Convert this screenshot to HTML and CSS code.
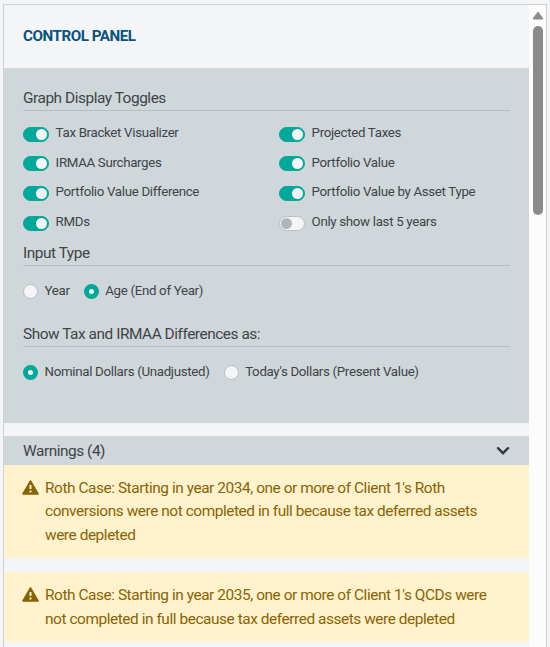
FILE: index.html
```html
<!DOCTYPE html>
<html lang="en">
<head>
    <meta charset="UTF-8">
    <meta name="viewport" content="width=device-width, initial-scale=1.0">
    <title>Control Panel</title>
    <link rel="stylesheet" href="styles.css">
</head>
<body>
    <div class="control-panel">
        <div class="panel-content">
            <h2 class="panel-title">Control Panel</h2>

            <div class="settings">
                <h3 class="section-title">Graph Display Toggles</h3>
                <div class="toggle-grid">
                    <label class="toggle"><input type="checkbox" checked><span>Tax Bracket Visualizer</span></label>
                    <label class="toggle"><input type="checkbox" checked><span>Projected Taxes</span></label>
                    <label class="toggle"><input type="checkbox" checked><span>IRMAA Surcharges</span></label>
                    <label class="toggle"><input type="checkbox" checked><span>Portfolio Value</span></label>
                    <label class="toggle"><input type="checkbox" checked><span>Portfolio Value Difference</span></label>
                    <label class="toggle"><input type="checkbox" checked><span>Portfolio Value by Asset Type</span></label>
                    <label class="toggle"><input type="checkbox" checked><span>RMDs</span></label>
                    <label class="toggle"><input type="checkbox"><span>Only show last 5 years</span></label>
                </div>

                <h3 class="section-title">Input Type</h3>
                <div class="radio-row">
                    <label class="radio"><input type="radio" name="inputType"><span>Year</span></label>
                    <label class="radio"><input type="radio" name="inputType" checked><span>Age (End of Year)</span></label>
                </div>

                <h3 class="section-title">Show Tax and IRMAA Differences as:</h3>
                <div class="radio-row">
                    <label class="radio"><input type="radio" name="dollars" checked><span>Nominal Dollars (Unadjusted)</span></label>
                    <label class="radio"><input type="radio" name="dollars"><span>Today's Dollars (Present Value)</span></label>
                </div>
            </div>

            <div class="warnings-header">
                <span>Warnings (4)</span>
                <svg class="chevron" viewBox="0 0 14 10"><path d="M2 2.2 L7 7.2 L12 2.2"/></svg>
            </div>
            <div class="alert">
                <svg class="alert-icon" viewBox="0 0 17 15"><path class="triangle" d="M8.5 1 L16 14 H1 Z"/><path class="mark" d="M8.5 5 V9 M8.5 10.5 V12.5"/></svg>
                <p>Roth Case: Starting in year 2034, one or more of Client 1's Roth conversions were not completed in full because tax deferred assets were depleted</p>
            </div>
            <div class="alert">
                <svg class="alert-icon" viewBox="0 0 17 15"><path class="triangle" d="M8.5 1 L16 14 H1 Z"/><path class="mark" d="M8.5 5 V9 M8.5 10.5 V12.5"/></svg>
                <p>Roth Case: Starting in year 2035, one or more of Client 1's QCDs were not completed in full because tax deferred assets were depleted</p>
            </div>
        </div>
        <div class="scrollbar">
            <svg class="scroll-arrow" viewBox="0 0 12 9"><path d="M6 1 L11 8 H1 Z"/></svg>
            <div class="scroll-thumb"></div>
        </div>
    </div>
</body>
</html>
```
FILE: styles.css
```css
* {
    box-sizing: border-box;
}
body {
    font-family: Roboto, sans-serif;
    margin: 0;
    padding: 4px 3px 0;
    height: 647px;
    overflow: hidden;
    background: #f4f5f7;
    color: #404448;
}
.control-panel {
    display: flex;
    height: 643px;
    border: 1px solid #cfd1d3;
    border-bottom: none;
}
.panel-content {
    flex: 1;
}
.panel-title {
    margin: 0;
    height: 63px;
    padding-left: 19px;
    font-size: 15.2px;
    line-height: 63px;
    letter-spacing: -0.48px;
    font-weight: 700;
    text-transform: uppercase;
    color: #08527d;
}
.settings {
    height: 355px;
    padding: 17px 19px 0;
    background: #cfd7da;
}
.section-title {
    margin: 0;
    height: 26px;
    border-bottom: 1px solid #b9bec2;
    font-size: 15.4px;
    line-height: 26px;
    letter-spacing: -0.45px;
    font-weight: 400;
}
.toggle-grid {
    display: grid;
    grid-template-columns: 256px 1fr;
    grid-auto-rows: 29.7px;
    padding-top: 11px;
    height: 129px;
}
.toggle, .radio {
    display: flex;
    font-size: 13.3px;
    line-height: 22px;
    letter-spacing: -0.32px;
    white-space: nowrap;
}
.toggle input, .radio input {
    appearance: none;
    flex: none;
    margin: 4.5px 0 0;
    height: 15px;
    border: 1px solid #b9bec2;
    background: #f4f5f7;
}
.toggle input {
    width: 26px;
    margin-right: 6.6px;
    border-radius: 8px;
}
.toggle input::before {
    content: "";
    display: block;
    width: 11px;
    height: 11px;
    margin: 1px;
    border-radius: 50%;
    background: #b1b6ba;
}
.toggle input:checked {
    border-color: #00a89a;
    background: #00a89a;
}
.toggle input:checked::before {
    margin-left: 12px;
    background: #f4f5f7;
}
.radio-row {
    display: flex;
    gap: 14px;
    height: 55px;
    padding-top: 14px;
}
.radio input {
    width: 15px;
    margin-top: 4px;
    margin-right: 6.6px;
    border-radius: 50%;
}
.radio input:checked {
    border: 5px solid #00a89a;
}
.warnings-header {
    display: flex;
    align-items: center;
    justify-content: space-between;
    height: 29px;
    margin-top: 13px;
    padding: 0 19px;
    background: #cfd7da;
    font-size: 15.4px;
    letter-spacing: -0.45px;
}
.chevron {
    width: 14px;
    height: 10px;
    fill: none;
    stroke: #343a40;
    stroke-width: 2.4;
    stroke-linecap: round;
}
.alert {
    display: flex;
    margin-bottom: 14px;
    padding: 12px 19px 11px;
    background: #fff2cd;
    color: #876404;
}
.alert p {
    margin: 0;
    font-size: 15.4px;
    line-height: 23.4px;
    letter-spacing: -0.43px;
}
.alert-icon {
    flex: none;
    width: 17px;
    height: 15px;
    margin: 3px 6px 0 -1px;
}
.triangle {
    fill: #876404;
    stroke: #876404;
    stroke-width: 1.6;
    stroke-linejoin: round;
}
.mark {
    stroke: #fff2cd;
    stroke-width: 2;
}
.scrollbar {
    display: flex;
    flex-direction: column;
    align-items: center;
    width: 17px;
    padding-top: 6px;
    background: #fcfcfc;
}
.scroll-arrow {
    width: 12px;
    height: 9px;
    fill: #8b8b8b;
    stroke: #8b8b8b;
    stroke-linejoin: round;
}
.scroll-thumb {
    width: 10px;
    height: 189px;
    margin-top: 6px;
    border-radius: 5px;
    background: #8b8b8b;
}
```
